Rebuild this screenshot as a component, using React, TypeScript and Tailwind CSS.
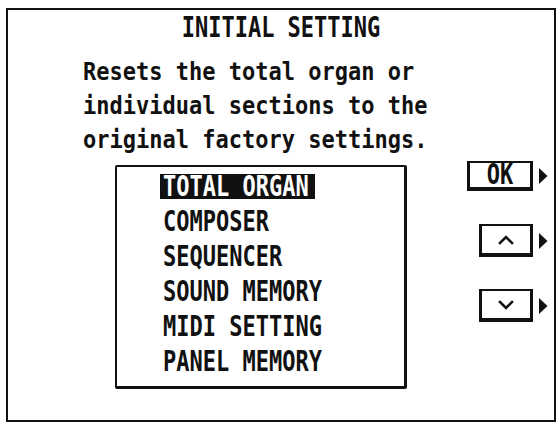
import React from "react";

const items = ["TOTAL ORGAN", "COMPOSER", "SEQUENCER", "SOUND MEMORY", "MIDI SETTING", "PANEL MEMORY"];

function Tri() {
  return (
    <svg viewBox="0 0 10 18" className="ml-[5px] w-[10px] h-[18px] shrink-0">
      <path d="M1 1 L9.5 9 L1 17 Z" fill="#111" />
    </svg>
  );
}

function Chevron({ up }: { up: boolean }) {
  return (
    <svg width="16" height="10" viewBox="0 0 16 10">
      <path d={up ? "M2 8 L8 2 L14 8" : "M2 2 L8 8 L14 2"} fill="none" stroke="#111" strokeWidth="2.6" strokeLinecap="square" />
    </svg>
  );
}

export default function App() {
  return (
    <div className="w-[559px] h-[426px] bg-white overflow-hidden font-['DejaVu_Sans_Mono',monospace] font-bold text-[#111]">
      <div className="mt-[8px] ml-[6px] w-[550px] h-[414px] border-2 border-[#111] flex flex-col">
        <div className="text-center text-[22px] leading-[36px] whitespace-pre">
          <span className="inline-block scale-y-125">INITIAL SETTING</span>
        </div>
        <div className="mt-[9px] pl-[75px] text-[22px] leading-[34px] whitespace-pre">
          <div><span className="inline-block scale-y-110">Resets the total organ or</span></div>
          <div><span className="inline-block scale-y-110">individual sections to the</span></div>
          <div><span className="inline-block scale-y-110">original factory settings.</span></div>
        </div>
        <div className="mt-[4px] flex">
          <div className="mt-[4px] ml-[107px] w-[292px] h-[224px] border-2 border-r-[3px] border-b-[3px] border-[#111] rounded-[2px] pt-[2px] pl-[43px] text-[22px] whitespace-pre">
            {items.map((it, i) => (
              <div key={it} className="h-[35px] flex items-center">
                <span
                  className={
                    i === 0
                      ? "inline-block h-[25px] leading-[25px] pl-[3px] pr-[6px] bg-[#111] text-white"
                      : "inline-block h-[25px] leading-[25px] px-[3px]"
                  }
                >
                  <span className="inline-block scale-y-125">{it}</span>
                </span>
              </div>
            ))}
          </div>
          <div className="flex-1 flex flex-col items-end pr-[6px]">
            <div className="flex items-center">
              <div className="w-[66px] h-[30px] border-[3px] border-t-2 border-b-4 border-[#111] flex items-center justify-center text-[22px]">
                <span className="inline-block scale-y-125 leading-none">OK</span>
              </div>
              <Tri />
            </div>
            <div className="flex items-center mt-[33px]">
              <div className="w-[54px] h-[33px] border-[3px] border-t-2 border-b-4 border-[#111] flex items-center justify-center">
                <Chevron up />
              </div>
              <Tri />
            </div>
            <div className="flex items-center mt-[32px]">
              <div className="w-[54px] h-[33px] border-[3px] border-t-2 border-b-4 border-[#111] flex items-center justify-center">
                <Chevron up={false} />
              </div>
              <Tri />
            </div>
          </div>
        </div>
      </div>
    </div>
  );
}
